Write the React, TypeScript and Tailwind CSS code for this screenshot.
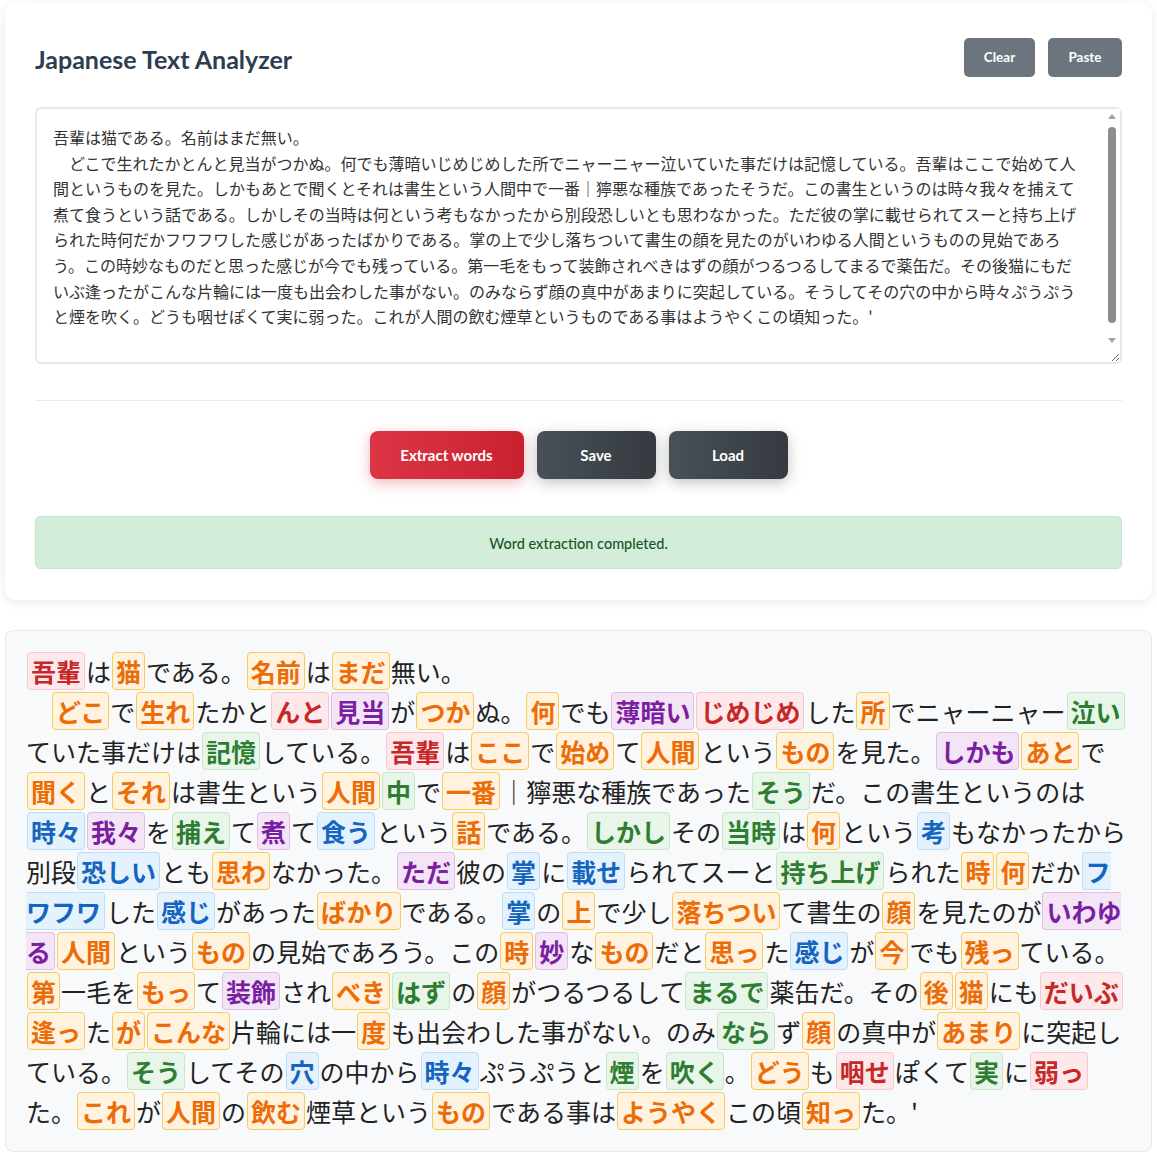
import React from "react";

const SOURCE =
  "吾輩は猫である。名前はまだ無い。\n　どこで生れたかとんと見当がつかぬ。何でも薄暗いじめじめした所でニャーニャー泣いていた事だけは記憶している。吾輩はここで始めて人間というものを見た。しかもあとで聞くとそれは書生という人間中で一番｜獰悪な種族であったそうだ。この書生というのは時々我々を捕えて煮て食うという話である。しかしその当時は何という考もなかったから別段恐しいとも思わなかった。ただ彼の掌に載せられてスーと持ち上げられた時何だかフワフワした感じがあったばかりである。掌の上で少し落ちついて書生の顔を見たのがいわゆる人間というものの見始であろう。この時妙なものだと思った感じが今でも残っている。第一毛をもって装飾されべきはずの顔がつるつるしてまるで薬缶だ。その後猫にもだいぶ逢ったがこんな片輪には一度も出会わした事がない。のみならず顔の真中があまりに突起している。そうしてその穴の中から時々ぷうぷうと煙を吹く。どうも咽せぽくて実に弱った。これが人間の飲む煙草というものである事はようやくこの頃知った。'";

const LINE1 = "[吾輩|r]は[猫|o]である。[名前|o]は[まだ|o]無い。";
const REST =
  "　[どこ|o]で[生れ|o]たかと[んと|r][見当|p]が[つか|o]ぬ。[何|o]でも[薄暗い|p][じめじめ|r]した[所|o]でニャーニャー[泣い|g]ていた事だけは[記憶|g]している。[吾輩|r]は[ここ|o]で[始め|o]て[人間|o]という[もの|o]を見た。[しかも|p][あと|o]で[聞く|o]と[それ|o]は書生という[人間|o][中|g]で[一番|o]｜獰悪な種族であった[そう|g]だ。この書生というのは[時々|b][我々|p]を[捕え|g]て[煮|p]て[食う|b]という[話|o]である。[しかし|g]その[当時|g]は[何|o]という[考|b]もなかったから別段[恐しい|b]とも[思わ|o]なかった。[ただ|p]彼の[掌|b]に[載せ|b]られてスーと[持ち上げ|g]られた[時|o][何|o]だか[フワフワ|b]した[感じ|b]があった[ばかり|o]である。[掌|b]の[上|o]で少し[落ちつい|o]て書生の[顔|o]を見たのが[いわゆる|p][人間|o]という[もの|o]の見始であろう。この[時|o][妙|p]な[もの|o]だと[思っ|o]た[感じ|b]が[今|o]でも[残っ|o]ている。[第|o]一毛を[もっ|o]て[装飾|p]され[べき|o][はず|g]の[顔|o]がつるつるして[まるで|g]薬缶だ。その[後|o][猫|o]にも[だいぶ|r][逢っ|o]た[が|o][こんな|o]片輪には一[度|o]も出会わした事がない。のみ[なら|g]ず[顔|o]の真中が[あまり|o]に突起している。[そう|g]してその[穴|b]の中から[時々|b]ぷうぷうと[煙|g]を[吹く|g]。[どう|o]も[咽せ|r]ぽくて[実|g]に[弱っ|r]た。[これ|o]が[人間|o]の[飲む|o]煙草という[もの|o]である事は[ようやく|o]この頃[知っ|o]た。'";

const COLORS: Record<string, string> = {
  r: "mx-[1px] px-[3px] border rounded-[4px] font-bold text-[#c62828] bg-[#fde9eb] border-[#f6c9ce]",
  o: "mx-[1px] px-[3px] border rounded-[4px] font-bold text-[#ec6d08] bg-[#fff3e0] border-[#f4cd5c]",
  p: "mx-[1px] px-[3px] border rounded-[4px] font-bold text-[#7b1fa2] bg-[#f3e5f5] border-[#e1bee7]",
  g: "mx-[1px] px-[3px] border rounded-[4px] font-bold text-[#2e7d32] bg-[#e8f5e9] border-[#c8e6c9]",
  b: "mx-[1px] px-[3px] border rounded-[4px] font-bold text-[#1565c0] bg-[#e3f2fd] border-[#bbdefb]",
};

type Seg = { t: string; c?: string };

function parse(s: string): Seg[] {
  const out: Seg[] = [];
  const re = /\[([^|\]]+)\|([a-z])\]/g;
  let last = 0;
  let m: RegExpExecArray | null;
  while ((m = re.exec(s))) {
    if (m.index > last) out.push({ t: s.slice(last, m.index) });
    out.push({ t: m[1], c: m[2] });
    last = re.lastIndex;
  }
  if (last < s.length) out.push({ t: s.slice(last) });
  return out;
}

function Segs({ s }: { s: string }) {
  return (
    <>
      {parse(s).map((seg, i) =>
        seg.c ? (
          <span key={i} className={COLORS[seg.c]}>
            {seg.t}
          </span>
        ) : (
          <React.Fragment key={i}>{seg.t}</React.Fragment>
        )
      )}
    </>
  );
}

export default function App() {
  return (
    <div className="min-h-[1158px] bg-white px-[5px] pt-[3px] pb-[6px] font-['Noto_Sans_CJK_JP',sans-serif]">
      <div className="rounded-[12px] bg-white px-[30px] pt-[35px] pb-[31px] shadow-[0_2px_12px_rgba(0,0,0,0.09)]">
        <div className="flex h-[39px] items-center justify-between">
          <h1 className="pt-[4px] font-['Lato',sans-serif] text-[25px] font-bold text-[#2c3e50]">
            Japanese Text Analyzer
          </h1>
          <div className="flex gap-[13px]">
            <button className="h-[39px] w-[71px] rounded-[5px] bg-[#6c757d] font-['Lato',sans-serif] text-[13.5px] font-bold text-white">
              Clear
            </button>
            <button className="h-[39px] w-[74px] rounded-[5px] bg-[#6c757d] font-['Lato',sans-serif] text-[13.5px] font-bold text-white">
              Paste
            </button>
          </div>
        </div>

        <div className="relative mt-[30px] h-[257px]">
          <textarea
            className="block h-full w-full resize-y overflow-hidden rounded-[6px] border-2 border-[#e6e9ec] bg-white py-4 pl-4 pr-[33px] text-[16px] leading-[1.6] text-[#333] outline-none"
            defaultValue={SOURCE}
          />
          <div className="pointer-events-none absolute top-[2px] right-[2px] flex h-[238px] w-[17px] flex-col items-center bg-white">
            <div className="mt-[5px] h-0 w-0 border-x-[4px] border-b-[5px] border-x-transparent border-b-[#a3a3a3]" />
            <div className="mt-[8px] h-[196px] w-[8px] rounded-full bg-[#8c8c8c]" />
            <div className="mt-[15px] h-0 w-0 border-x-[4px] border-t-[5px] border-x-transparent border-t-[#a3a3a3]" />
          </div>
        </div>

        <div className="mt-[36px] h-px bg-[#e9ecef]" />

        <div className="flex justify-center gap-[13px] pt-[30px]">
          <button className="h-[48px] w-[154px] rounded-[8px] bg-linear-to-r from-[#dc3545] to-[#c9202f] font-['Lato',sans-serif] text-[15px] font-bold text-white shadow-[0_4px_14px_rgba(220,53,69,0.35)]">
            Extract words
          </button>
          <button className="h-[48px] w-[119px] rounded-[8px] bg-linear-to-r from-[#495057] to-[#343a40] font-['Lato',sans-serif] text-[15px] font-bold text-white shadow-[0_4px_14px_rgba(52,58,64,0.3)]">
            Save
          </button>
          <button className="h-[48px] w-[119px] rounded-[8px] bg-linear-to-r from-[#495057] to-[#343a40] font-['Lato',sans-serif] text-[15px] font-bold text-white shadow-[0_4px_14px_rgba(52,58,64,0.3)]">
            Load
          </button>
        </div>

        <div className="mt-[37px] flex h-[53px] items-center justify-center rounded-[5px] border border-[#c3e6cb] bg-[#d4edda] pt-[2px] font-['Lato',sans-serif] text-[14.5px] font-medium text-[#155724]">
          Word extraction completed.
        </div>
      </div>

      <div className="mt-[30px] rounded-[8px] border border-[#e6e8eb] bg-[#f8f9fa] p-[20px] text-[25px] leading-[40px] text-[#222]">
        <Segs s={LINE1} />
        <br />
        <Segs s={REST} />
      </div>
    </div>
  );
}
